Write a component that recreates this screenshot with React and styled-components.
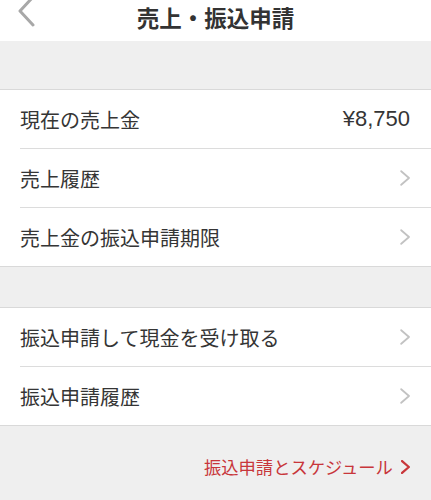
import React from 'react';
import styled, { createGlobalStyle } from "styled-components";

const GlobalStyle = createGlobalStyle`
    body {
        margin: 0;
        background-color: #efefef;
        font-family: "Noto Sans CJK JP", "Noto Sans", sans-serif;
        color: #333;
    }
`;

const Page = styled.div`
    display: flex;
    flex-direction: column;
    width: 431px;
    height: 500px;
    overflow: hidden;
    background-color: #efefef;
`;

const Header = styled.div`
    display: grid;
    grid-template-columns: 60px 1fr 60px;
    align-items: start;
    height: 41px;
    background-color: #fff;
`;

const BackButton = styled.div`
    display: flex;
    padding-left: 17px;
    margin-top: -5px;
`;

const Title = styled.div`
    text-align: center;
    font-size: 22.5px;
    font-weight: bold;
    line-height: 34px;
    color: #333;
`;

const Spacer = styled.div`
    height: ${props => props.$height}px;
`;

const Section = styled.div`
    display: flex;
    flex-direction: column;
    background-color: #fff;
    border-top: 1px solid #d9d9d9;
    border-bottom: 1px solid #d9d9d9;
`;

const Row = styled.div`
    display: flex;
    align-items: center;
    justify-content: space-between;
    height: 58px;
    margin-left: 20px;
    padding-right: 21px;
    border-top: ${props => props.$first ? "none" : "1px solid #dcdcdc"};
`;

const Label = styled.div`
    font-size: 20px;
    color: #353535;
`;

const Value = styled.div`
    font-size: 22px;
    font-family: "Liberation Sans", "Noto Sans", sans-serif;
    color: #353535;
`;

const Footer = styled.div`
    display: flex;
    justify-content: flex-end;
    padding: 28px 21px 0 0;
`;

const LinkText = styled.div`
    display: flex;
    align-items: center;
    gap: 8px;
    font-size: 17.3px;
    color: #c8363a;
`;

function Chevron({ color = "#c2c2c2", width = 1.8, size = 16 }) {
    return (
        <svg width={size * 0.65} height={size} viewBox="0 0 10.4 16">
            <path d="M1.2 1.2 L9 8 L1.2 14.8" fill="none" stroke={color} strokeWidth={width} strokeLinecap="round" strokeLinejoin="round" />
        </svg>
    );
}

function App() {
    return (
        <Page>
            <GlobalStyle />
            <Header>
                <BackButton>
                    <svg width="18" height="32" viewBox="0 0 18 32">
                        <path d="M16 2 L3 16 L16 30" fill="none" stroke="#a8a8a8" strokeWidth="3" strokeLinecap="round" strokeLinejoin="round" />
                    </svg>
                </BackButton>
                <Title>売上・振込申請</Title>
                <div />
            </Header>
            <Spacer $height={48} />
            <Section>
                <Row $first>
                    <Label>現在の売上金</Label>
                    <Value>¥8,750</Value>
                </Row>
                <Row>
                    <Label>売上履歴</Label>
                    <Chevron />
                </Row>
                <Row>
                    <Label>売上金の振込申請期限</Label>
                    <Chevron />
                </Row>
            </Section>
            <Spacer $height={40} />
            <Section>
                <Row $first>
                    <Label>振込申請して現金を受け取る</Label>
                    <Chevron />
                </Row>
                <Row>
                    <Label>振込申請履歴</Label>
                    <Chevron />
                </Row>
            </Section>
            <Footer>
                <LinkText>
                    振込申請とスケジュール
                    <Chevron color="#c8363a" width={2.6} size={14} />
                </LinkText>
            </Footer>
        </Page>
    );
}

export default App;
